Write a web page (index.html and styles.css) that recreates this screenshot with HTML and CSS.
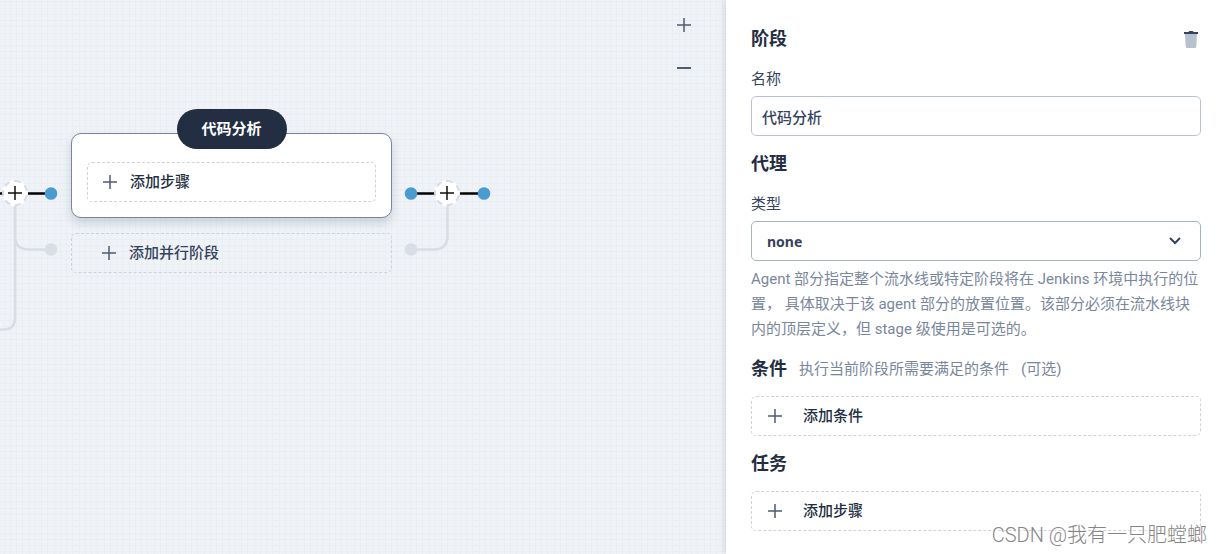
FILE: index.html
```html
<!DOCTYPE html>
<html lang="zh-CN">
<head>
<meta charset="utf-8">
<title>流水线编辑</title>
<link rel="stylesheet" href="styles.css">
</head>
<body>
<div class="editor">
  <main class="canvas">
    <svg class="links" width="520" height="360" viewBox="0 0 520 360" aria-hidden="true">
      <g fill="none" stroke="#d9dde3" stroke-width="2.5">
        <path d="M15 206V318Q15 329.500 4 329.500H0"/>
        <path d="M15 206V236Q15 249.500 29 249.500H51"/>
        <path d="M447.500 206V236Q447.500 249.500 434 249.500H411"/>
      </g>
      <path d="M0 193.500H51M411 193.500H484" stroke="#000" stroke-width="2.500"/>
      <g fill="#4a9bcf"><circle cx="51" cy="193.500" r="6.300"/><circle cx="411" cy="193.500" r="6.300"/><circle cx="484" cy="193.500" r="6.300"/></g>
      <g fill="#d8dde6"><circle cx="51" cy="249.500" r="6.300"/><circle cx="411" cy="249.500" r="6.300"/></g>
    </svg>
    <button class="joint joint-before" aria-label="插入阶段"><svg width="14" height="14" viewBox="0 0 14 14"><path d="M0 7H14M7 0V14"/></svg></button>
    <button class="joint joint-after" aria-label="追加阶段"><svg width="14" height="14" viewBox="0 0 14 14"><path d="M0 7H14M7 0V14"/></svg></button>
    <section class="stage">
      <div class="card">
        <span class="pill">代码分析</span>
        <button class="add"><svg class="plus" width="14" height="14" viewBox="0 0 14 14"><path d="M0 7H14M7 0V14"/></svg>添加步骤</button>
      </div>
      <button class="add add-parallel"><svg class="plus" width="14" height="14" viewBox="0 0 14 14"><path d="M0 7H14M7 0V14"/></svg>添加并行阶段</button>
    </section>
    <div class="zoom">
      <button class="icon-button" aria-label="放大"><svg class="plus" width="14" height="14" viewBox="0 0 14 14"><path d="M0 7H14M7 0V14"/></svg></button>
      <button class="icon-button" aria-label="缩小"><svg class="plus minus" width="14" height="14" viewBox="0 0 14 14"><path d="M0 7H14"/></svg></button>
    </div>
  </main>
  <aside class="panel">
    <header class="panel-head">
      <h2 class="title">阶段</h2>
      <button class="icon-button" aria-label="删除"><svg width="20" height="20" viewBox="0 0 20 20"><path d="M4 4H16L15.300 16.500Q15.200 18 13.700 18H6.300Q4.800 18 4.700 16.500Z" fill="#b6c2cd"/><path d="M3 2H7.500L8.200 1H11.800L12.500 2H17V4H3Z" fill="#36435c"/></svg></button>
    </header>
    <label class="label" for="name">名称</label>
    <input class="field" id="name" type="text" value="代码分析">
    <h2 class="title">代理</h2>
    <label class="label" for="type">类型</label>
    <div class="select-wrap">
      <select class="field select" id="type"><option>none</option></select>
      <svg class="chevron" width="12" height="8" viewBox="0 0 12 8" aria-hidden="true"><path d="M1 1L6 6L11 1"/></svg>
    </div>
    <p class="help">Agent 部分指定整个流水线或特定阶段将在 Jenkins 环境中执行的位置， 具体取决于该 agent 部分的放置位置。该部分必须在流水线块内的顶层定义，但 stage 级使用是可选的。</p>
    <div class="title-row">
      <h2 class="title">条件</h2>
      <span class="hint">执行当前阶段所需要满足的条件</span>
      <span class="hint">(可选)</span>
    </div>
    <button class="add add-wide"><svg class="plus" width="14" height="14" viewBox="0 0 14 14"><path d="M0 7H14M7 0V14"/></svg>添加条件</button>
    <h2 class="title">任务</h2>
    <button class="add add-wide"><svg class="plus" width="14" height="14" viewBox="0 0 14 14"><path d="M0 7H14M7 0V14"/></svg>添加步骤</button>
  </aside>
  <div class="watermark">CSDN @我有一只肥螳螂</div>
</div>
</body>
</html>
```
FILE: styles.css
```css
* { box-sizing: border-box; }
body {
  margin: 0;
  font-family: Roboto, "Noto Sans CJK SC", sans-serif;
  font-size: 15px;
  line-height: 25px;
  color: #36435c;
}
button, input, select { font: inherit; color: inherit; }
button { cursor: pointer; }
svg { display: block; flex: none; }
.editor { position: relative; display: flex; min-height: 100vh; overflow: hidden; }
.canvas {
  --line: #eaeef3;
  position: relative;
  flex: 1;
  min-width: 0;
  background-color: #eff3f8;
  background-image:
    linear-gradient(to right, transparent 4px, var(--line) 4px 5px, transparent 5px 10px, var(--line) 10px 11px, transparent 11px 16px, var(--line) 16px 17px, transparent 17px 22px, var(--line) 22px 23px, transparent 23px),
    linear-gradient(to bottom, transparent 1px, var(--line) 1px 2px, transparent 2px 8px, var(--line) 8px 9px, transparent 9px 14px, var(--line) 14px 15px, transparent 15px 20px, var(--line) 20px 21px, transparent 21px);
  background-size: 25px 25px;
}
.links { position: absolute; left: 0; top: 0; }
.joint {
  position: absolute;
  top: 180px;
  display: grid;
  place-items: center;
  width: 26px;
  height: 26px;
  padding: 0;
  border: 2px dashed #d8dde5;
  border-radius: 50%;
  background: #fff;
}
.joint path { stroke: #111; stroke-width: 1.5; }
.joint-before { left: 2px; }
.joint-after { left: 434px; }
.stage { position: absolute; left: 71px; top: 133px; width: 321px; }
.card {
  position: relative;
  padding: 28px 15px 15px;
  border: 1px solid #79859d;
  border-radius: 10px;
  background: #fff;
  box-shadow: 0 5px 10px rgba(54, 67, 92, 0.2);
}
.pill {
  position: absolute;
  left: 50%;
  top: -25px;
  transform: translateX(-50%);
  padding: 0 25px;
  border-radius: 20px;
  background: #242e42;
  color: #fff;
  font-weight: 700;
  line-height: 40px;
  white-space: nowrap;
}
.add {
  display: flex;
  align-items: center;
  gap: 13px;
  width: 100%;
  height: 40px;
  padding: 0 15px;
  border: 1px dashed #ccd3db;
  border-radius: 5px;
  background: transparent;
  color: #36435c;
  font-weight: 500;
}
.card .add { color: #242e42; }
.add-parallel { margin-top: 15px; padding-left: 30px; }
.add-wide { gap: 21px; padding-left: 16px; color: #242e42; }
.plus path { stroke: #4f5d72; stroke-width: 1.5; }
.minus path { stroke-width: 2; }
.zoom { position: absolute; right: 32px; top: 15px; display: grid; gap: 23px; }
.icon-button { display: grid; place-items: center; width: 20px; height: 20px; padding: 0; border: 0; background: none; }
.panel {
  position: relative;
  width: 495px;
  padding: 26px 20px 23px 25px;
  background: #fff;
  box-shadow: 0 0 6px rgba(54, 67, 92, 0.25);
}
.panel-head { display: flex; align-items: center; justify-content: space-between; }
.title { margin: 15px 0 14px; font-size: 18px; line-height: 26px; font-weight: 700; color: #242e42; }
.panel-head .title { margin-top: 0; }
.panel-head .icon-button { margin-bottom: 12px; }
.label { display: block; margin-bottom: 4px; line-height: 26px; }
.field {
  display: block;
  width: 100%;
  height: 40px;
  padding: 0 10px;
  border: 1px solid #bcc4d2;
  border-radius: 5px;
  background: #fff;
  font-weight: 500;
}
.select-wrap { position: relative; }
.select { appearance: none; padding: 0 15px; border-color: #a9b4c3; font-family: "Noto Sans", sans-serif; font-size: 14px; font-weight: 700; }
.chevron { position: absolute; right: 20px; top: 16px; pointer-events: none; }
.chevron path { fill: none; stroke: #36435c; stroke-width: 2; }
.help { margin: 6px 0 14px; color: #79879c; }
.title-row { display: flex; align-items: center; gap: 12px; margin-bottom: 14px; }
.title-row .title { margin: 0; }
.hint { color: #79879c; }
.watermark {
  position: absolute;
  right: 14px;
  bottom: 6px;
  color: #858585;
  font-size: 20px;
  font-weight: 300;
  text-shadow: 1px 1px 0 #fff;
  white-space: nowrap;
}
```
